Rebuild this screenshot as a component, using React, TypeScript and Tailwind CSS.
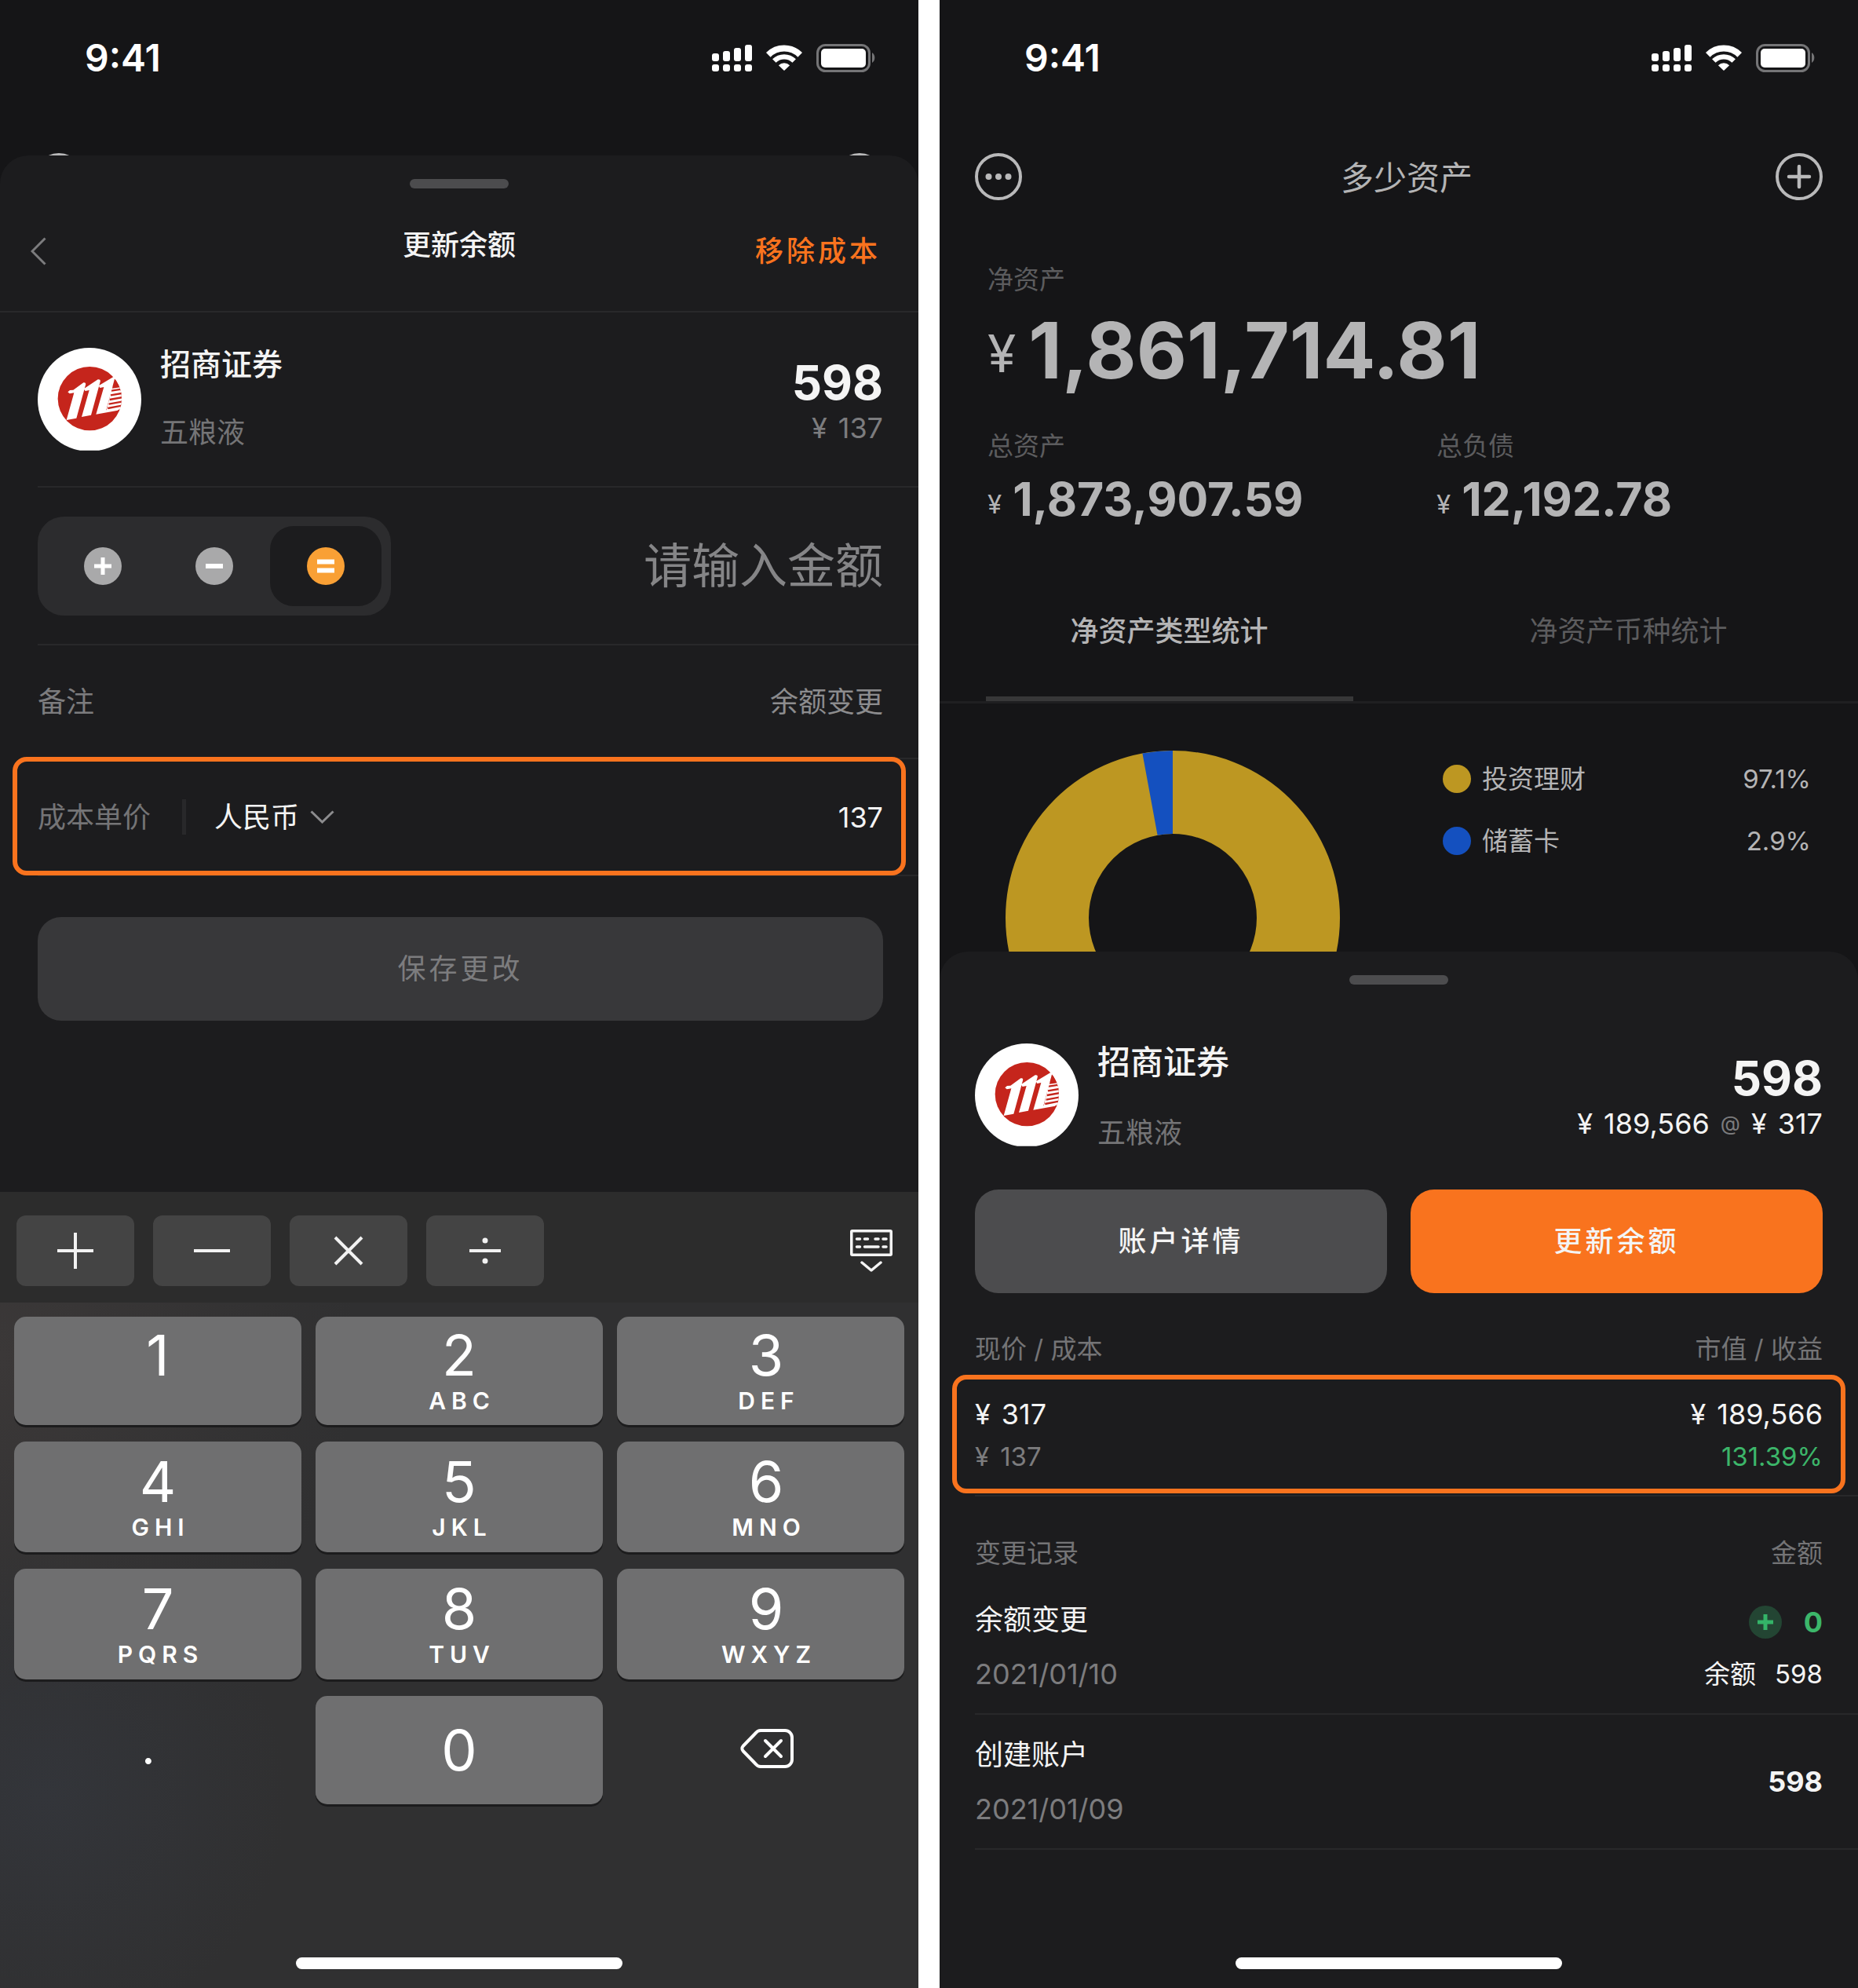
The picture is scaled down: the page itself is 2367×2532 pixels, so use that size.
import React from "react";

const FONT = "font-['Inter','Noto_Sans_CJK_SC',sans-serif]";

function StatusBar() {
  return (
    <div className="flex h-[148px] items-center justify-between pl-[108px] pr-[54px] text-white">
      <span className="text-[48px] font-semibold leading-[60px]">9:41</span>
      <svg width="209" height="36" viewBox="0 0 209 36" fill="none" aria-hidden="true">
        <g fill="#fff">
          <rect x="0" y="12" width="9" height="10" rx="3" />
          <rect x="14" y="9" width="9" height="13" rx="3" />
          <rect x="28" y="5" width="9" height="17" rx="3" />
          <rect x="42" y="1" width="9" height="21" rx="3" />
          <rect x="0" y="26" width="9" height="9" rx="3" />
          <rect x="14" y="26" width="9" height="9" rx="3" />
          <rect x="28" y="26" width="9" height="9" rx="3" />
          <rect x="42" y="26" width="9" height="9" rx="3" />
          <path d="M92 34 L84.9 27.2 A10 10 0 0 1 99.1 27.2Z" />
          <rect x="139" y="6" width="57" height="24" rx="5" />
        </g>
        <path d="M71.8 13.8 A28.7 28.7 0 0 1 112.2 13.8" stroke="#fff" strokeWidth="8" />
        <path d="M79.3 21.6 A18 18 0 0 1 104.7 21.6" stroke="#fff" strokeWidth="6.4" />
        <rect x="134.5" y="1.5" width="66" height="33" rx="10" stroke="#757577" strokeWidth="3" />
        <path d="M204 11 a8 8 0 0 1 0 13Z" fill="#757577" />
      </svg>
    </div>
  );
}

function MoreIcon() {
  return (
    <svg width="60" height="60" viewBox="0 0 60 60" fill="none" aria-hidden="true">
      <circle cx="30" cy="30" r="28" stroke="#b9b9ba" strokeWidth="4" />
      <g fill="#b9b9ba">
        <circle cx="17.5" cy="30" r="4" />
        <circle cx="30" cy="30" r="4" />
        <circle cx="42.5" cy="30" r="4" />
      </g>
    </svg>
  );
}

function AddIcon() {
  return (
    <svg width="60" height="60" viewBox="0 0 60 60" fill="none" aria-hidden="true">
      <circle cx="30" cy="30" r="28" stroke="#b9b9ba" strokeWidth="4" />
      <path d="M30 17v26M17 30h26" stroke="#b9b9ba" strokeWidth="4.5" strokeLinecap="round" />
    </svg>
  );
}

function BrokerLogo() {
  return (
    <svg className="shrink-0" width="132" height="132" viewBox="24 39 396 396" aria-hidden="true">
      <defs>
        <clipPath id="disc">
          <circle cx="223" cy="233" r="122" />
        </clipPath>
        <clipPath id="flat">
          <rect x="24" y="39" width="396" height="392" />
        </clipPath>
      </defs>
      <circle cx="222" cy="237" r="198" fill="#fff" clipPath="url(#flat)" />
      <circle cx="223" cy="233" r="122" fill="#c5251c" />
      <g clipPath="url(#disc)">
        <path fill="#fff" d="M308 188 L350 182 L350 272 L286 283Z" />
        <g stroke="#c5251c" strokeWidth="7">
          <path d="M306 203 L350 196" />
          <path d="M303 220 L350 212" />
          <path d="M299 237 L350 228" />
          <path d="M296 254 L350 244" />
          <path d="M292 270 L350 259" />
        </g>
        <path fill="#c5251c" d="M316 158 L360 150 L350 188 L309 194Z" />
      </g>
      <g fill="#fff">
        <path d="M139 208 L147 201 L160 200 L199 172 Q210 170 207 181 L172 308 L134 315 L163 211 L146 214Z" />
        <path d="M200 196 L254 160 Q266 158 263 169 L228 296 L192 303 L221 201 L206 204Z" />
        <path d="M257 184 L312 151 L320 150 L286 277 L337 271 L330 278 L247 293 L277 189 L262 192Z" />
      </g>
    </svg>
  );
}

function Handle() {
  return <div className="mx-auto h-3 w-[126px] rounded-full bg-[#4c4c4e]" />;
}

function HomeIndicator() {
  return <div className="mx-auto mb-6 h-[15px] w-[416px] rounded-full bg-white" />;
}

function Money({ value }: { value: string }) {
  return (
    <span className="inline-flex gap-[14px]">
      <span>¥</span>
      <span>{value}</span>
    </span>
  );
}

function ModeGlyph({ mode }: { mode: string }) {
  return (
    <svg width="48" height="48" viewBox="0 0 48 48" aria-hidden="true">
      <circle cx="24" cy="24" r="24" fill={mode === "equal" ? "#f9a035" : "#a9a9aa"} />
      <g fill="#fff">
        {mode === "plus" && <path d="M21.5 13h5v8.5H35v5h-8.5V35h-5v-8.5H13v-5h8.5Z" />}
        {mode === "minus" && <rect x="13" y="21" width="22" height="6" />}
        {mode === "equal" && (
          <>
            <rect x="13" y="15.500" width="22" height="6" />
            <rect x="13" y="26.500" width="22" height="6" />
          </>
        )}
      </g>
    </svg>
  );
}

const MODES = [
  { id: "plus", label: "增加" },
  { id: "minus", label: "减少" },
  { id: "equal", label: "等于" },
];

function OperatorGlyph({ op }: { op: string }) {
  return (
    <svg width="48" height="48" viewBox="0 0 48 48" fill="none" stroke="#f2f2f2" strokeWidth="4" aria-hidden="true">
      {op === "加" && <path d="M24 1v46M1 24h46" />}
      {op === "减" && <path d="M1 24h46" />}
      {op === "乘" && <path d="M7 7l34 34M41 7L7 41" />}
      {op === "除" && (
        <>
          <path d="M4 24h40" />
          <circle cx="24" cy="11" r="3.5" fill="#f2f2f2" stroke="none" />
          <circle cx="24" cy="37" r="3.5" fill="#f2f2f2" stroke="none" />
        </>
      )}
    </svg>
  );
}

const KEYS = [
  ["1", ""],
  ["2", "ABC"],
  ["3", "DEF"],
  ["4", "GHI"],
  ["5", "JKL"],
  ["6", "MNO"],
  ["7", "PQRS"],
  ["8", "TUV"],
  ["9", "WXYZ"],
];

const KEY_CLASS =
  "flex flex-col items-center justify-center rounded-[15px] bg-[#6f6f70] text-white shadow-[0_3px_0_#1c1c1d] nth-[3n]:pl-[14px]";

function Keyboard() {
  return (
    <div className="flex flex-col">
      <div className="flex items-start justify-between bg-[#2c2c2c] pb-[21px] pl-[21px] pr-[33px] pt-[30px]">
        <div className="flex gap-6">
          {["加", "减", "乘", "除"].map((op) => (
            <button
              key={op}
              type="button"
              aria-label={op}
              className="flex h-[90px] w-[150px] items-center justify-center rounded-xl bg-[#444444]"
            >
              <OperatorGlyph op={op} />
            </button>
          ))}
        </div>
        <button type="button" aria-label="收起键盘" className="pt-[18px]">
          <svg width="54" height="54" viewBox="0 0 54 54" fill="none" stroke="#f4f4f4" aria-hidden="true">
            <rect x="1.750" y="1.750" width="50.500" height="30.500" rx="1" strokeWidth="3.500" />
            <g strokeWidth="3.500" strokeLinecap="round">
              <path d="M8.500 12h4M18.500 12h4M32 12h4M42 12h4" />
              <path d="M8.500 22h4M18.500 22h17.500M42 22h4" />
              <path d="M15 42l12 10 12-10" strokeLinejoin="round" />
            </g>
          </svg>
        </button>
      </div>
      <div className="bg-[#303031] bg-[radial-gradient(circle_at_5%_72%,#33353a_0%,transparent_24%),radial-gradient(circle_at_0%_8%,#3b3838_0%,transparent_32%)]">
        <div className="grid grid-cols-3 grid-rows-[138px_141px_141px_138px] gap-x-[18px] gap-y-[21px] px-[18px] pt-[18px]">
          {KEYS.map(([digit, letters]) => (
            <button key={digit} type="button" className={KEY_CLASS}>
              <span className="text-[72px] leading-[72px]">{digit}</span>
              <span className="mt-1 h-9 pl-[7px] text-[30px] font-semibold leading-9 tracking-[7px]">{letters}</span>
            </button>
          ))}
          <button
            type="button"
            className="flex items-center justify-center pb-2 pr-6 text-[60px] leading-[60px] text-white"
          >
            .
          </button>
          <button type="button" className={KEY_CLASS}>
            <span className="text-[72px] leading-[72px]">0</span>
          </button>
          <button type="button" aria-label="删除" className="flex items-center justify-center pb-1 pl-4">
            <svg width="68" height="50" viewBox="0 0 68 50" fill="none" stroke="#fff" strokeWidth="4" aria-hidden="true">
              <path
                d="M26 2h31a9 9 0 0 1 9 9v28a9 9 0 0 1-9 9H26a8 8 0 0 1-6-3L3.500 28a4.500 4.500 0 0 1 0-6L20 5a8 8 0 0 1 6-3Z"
                strokeLinejoin="round"
              />
              <path d="M32 15l20 20M52 15L32 35" strokeLinecap="round" />
            </svg>
          </button>
        </div>
        <div className="flex pt-[195px]">
          <HomeIndicator />
        </div>
      </div>
    </div>
  );
}

function UpdateBalanceScreen() {
  return (
    <section className="flex min-h-screen flex-col bg-[#151517]">
      <StatusBar />
      <div className="mt-[47px] flex h-[3px] justify-between overflow-hidden px-[45px]">
        <MoreIcon />
        <AddIcon />
      </div>
      <div className="flex flex-1 flex-col rounded-t-[36px] bg-[#1c1c1e] pt-[30px]">
        <Handle />
        <header className="grid grid-cols-[1fr_auto_1fr] items-center border-b-2 border-[#28282a] px-[39px] pt-1">
          <button type="button" aria-label="返回" className="justify-self-start">
            <svg width="20" height="36" viewBox="0 0 20 36" fill="none" aria-hidden="true">
              <path d="M18.500 1.500L2 18l16.500 16.500" stroke="#7c7c7e" strokeWidth="3" />
            </svg>
          </button>
          <h1 className="pb-4 text-[36px] font-medium leading-[136px] text-[#f4f4f4]">更新余额</h1>
          <button
            type="button"
            className="mr-[9px] justify-self-end text-[36px] font-medium leading-[48px] tracking-[4px] text-[#f9731e]"
          >
            移除成本
          </button>
        </header>

        <div className="ml-12 flex items-start border-b-2 border-[#28282a] pb-11 pr-[45px] pt-[45px]">
          <BrokerLogo />
          <div className="ml-6 flex h-[132px] flex-1 flex-col justify-between">
            <h2 className="text-[39px] font-medium leading-[42px] text-[#f4f4f4]">招商证券</h2>
            <p className="text-[36px] leading-[48px] text-[#747476]">五粮液</p>
          </div>
          <div className="mt-3 text-right">
            <p className="text-[60px] font-bold leading-[64px] text-[#f4f4f4]">598</p>
            <p className="text-[36px] leading-[52px] text-[#7c7c7e]">
              <Money value="137" />
            </p>
          </div>
        </div>

        <div className="ml-12 flex items-center justify-between border-b-2 border-[#28282a] pb-9 pr-[45px] pt-[37px]">
          <div role="radiogroup" aria-label="变更方式" className="flex rounded-[33px] bg-[#2c2c2e] p-3">
            {MODES.map((m) => (
              <label
                key={m.id}
                className="flex h-[102px] w-[142px] items-center justify-center rounded-[30px] has-checked:bg-[#1c1c1e]"
              >
                <input
                  type="radio"
                  name="mode"
                  className="size-0 appearance-none"
                  aria-label={m.label}
                  defaultChecked={m.id === "equal"}
                />
                <ModeGlyph mode={m.id} />
              </label>
            ))}
          </div>
          <input
            type="text"
            aria-label="金额"
            placeholder="请输入金额"
            className="w-[480px] bg-transparent text-right text-[61px] leading-[80px] text-white outline-none placeholder:text-[#858587]"
          />
        </div>

        <div className="ml-12 flex h-[145px] items-center justify-between border-b-2 border-[#28282a] pr-[45px] text-[36px] leading-[48px]">
          <label htmlFor="note" className="text-[#7c7c7e]">
            备注
          </label>
          <input
            id="note"
            type="text"
            defaultValue="余额变更"
            className="w-[480px] bg-transparent text-right text-[#8c8c8e] outline-none"
          />
        </div>

        <div className="relative ml-12 flex h-[149px] items-center border-b-2 border-[#28282a] pr-[45px] text-[36px] leading-[48px]">
          <div className="pointer-events-none absolute -left-8 -top-[3px] bottom-[-1px] right-4 rounded-[18px] border-6 border-[#f9731e] bg-transparent" />
          <label htmlFor="cost" className="text-[#747476]">
            成本单价
          </label>
          <div className="ml-10 h-[45px] w-[5px] bg-[#28282a]" />
          <div className="relative ml-9 flex items-center">
            <select
              aria-label="币种"
              defaultValue="cny"
              className="appearance-none bg-transparent pr-[44px] text-[#f4f4f4] outline-none"
            >
              <option value="cny">人民币</option>
            </select>
            <svg
              className="pointer-events-none absolute right-0"
              width="31"
              height="17"
              viewBox="0 0 31 17"
              fill="none"
              aria-hidden="true"
            >
              <path d="M1.500 1.500l14 13.500 14-13.500" stroke="#8c8c8e" strokeWidth="3" />
            </svg>
          </div>
          <input
            id="cost"
            type="text"
            defaultValue="137"
            className="ml-auto w-[480px] bg-transparent text-right text-[#f4f4f4] outline-none"
          />
        </div>

        <button
          type="button"
          className="ml-12 mr-[45px] mt-[52px] h-[132px] rounded-[30px] bg-[#38383a] text-[36px] leading-[48px] tracking-[4px] text-[#7c7c7e]"
        >
          保存更改
        </button>
      </div>
      <Keyboard />
    </section>
  );
}

const SLICES = [
  { name: "投资理财", share: "97.1%", color: "bg-[#bd9722]" },
  { name: "储蓄卡", share: "2.9%", color: "bg-[#1450bf]" },
];

function Donut() {
  return (
    <svg className="shrink-0" width="426" height="426" viewBox="-213 -213 426 426" fill="none" aria-hidden="true">
      <circle r="160" stroke="#bd9722" strokeWidth="106" />
      <path d="M0 -213 A213 213 0 0 0 -38.600 -209.500 L-19.400 -105.200 A107 107 0 0 1 0 -107Z" fill="#1450bf" />
    </svg>
  );
}

function AssetsScreen() {
  return (
    <section className="flex min-h-screen flex-col bg-[#151517] text-[#b4b4b5]">
      <StatusBar />
      <header className="mt-[47px] flex items-center justify-between px-[45px]">
        <button type="button" aria-label="更多">
          <MoreIcon />
        </button>
        <h1 className="pl-5 pt-1 text-[42px] leading-[56px]">多少资产</h1>
        <button type="button" aria-label="添加">
          <AddIcon />
        </button>
      </header>

      <div className="pl-[61px] pt-[77px]">
        <p className="text-[33px] leading-[48px] text-[#5c5c5e]">净资产</p>
        <p className="mt-[18px] flex items-center gap-4">
          <span className="pt-2 text-[66px] leading-[64px]">¥</span>
          <span className="text-[99px] font-bold leading-[96px]">1,861,714.81</span>
        </p>
      </div>

      <div className="mt-[50px] grid grid-cols-2">
        {[
          { label: "总资产", value: "1,873,907.59", pad: "pl-[61px]" },
          { label: "总负债", value: "12,192.78", pad: "pl-12" },
        ].map((item) => (
          <div key={item.label} className={item.pad}>
            <p className="text-[33px] leading-[48px] text-[#5c5c5e]">{item.label}</p>
            <p className="mt-2 flex items-center gap-[14px]">
              <span className="pt-3 text-[33px] leading-[32px]">¥</span>
              <span className="text-[59px] font-bold leading-[72px]">{item.value}</span>
            </p>
          </div>
        ))}
      </div>

      <nav className="mt-[43px] grid grid-cols-2 border-b-3 border-[#1f1f21] text-[36px] leading-[48px]">
        <button type="button" aria-current="true" className="relative h-[178px] font-medium">
          净资产类型统计
          <span className="absolute bottom-0 left-[10%] h-[6px] w-4/5 bg-[#373738]" />
        </button>
        <button type="button" className="h-[178px] text-[#5c5c5e]">
          净资产币种统计
        </button>
      </nav>

      <div className="flex h-[316px] items-start justify-between overflow-hidden pl-[84px] pr-[60px]">
        <div className="pt-[60px]">
          <Donut />
        </div>
        <ul className="w-[469px] pt-14">
          {SLICES.map((s) => (
            <li key={s.name} className="flex h-[79px] items-center text-[33px] leading-[48px]">
              <span className={`mr-[14px] size-9 rounded-full ${s.color}`} />
              <span>{s.name}</span>
              <span className="ml-auto">{s.share}</span>
            </li>
          ))}
        </ul>
      </div>

      <div className="flex flex-1 flex-col rounded-t-[36px] bg-[#1c1c1e] pt-[30px] text-[#f4f4f4]">
        <Handle />
        <div className="mt-[75px] flex items-start px-[45px]">
          <BrokerLogo />
          <div className="ml-6 flex h-[132px] flex-1 flex-col justify-between">
            <h2 className="text-[42px] font-medium leading-[48px]">招商证券</h2>
            <p className="text-[36px] leading-[36px] text-[#747476]">五粮液</p>
          </div>
          <div className="mt-3 text-right">
            <p className="text-[60px] font-bold leading-[64px]">598</p>
            <p className="flex items-center justify-end gap-[14px] text-[36px] leading-[52px]">
              <Money value="189,566" />
              <span className="text-[26px] leading-[26px] text-[#7c7c7e]">@</span>
              <Money value="317" />
            </p>
          </div>
        </div>

        <div className="mt-[54px] grid grid-cols-2 gap-[30px] px-[45px] text-[36px] font-medium leading-[48px] tracking-[4px]">
          <button type="button" className="h-[132px] rounded-[30px] bg-[#4c4c4e]">
            账户详情
          </button>
          <button type="button" className="h-[132px] rounded-[30px] bg-[#f9731e]">
            更新余额
          </button>
        </div>

        <div className="mt-[47px] flex justify-between px-[45px] text-[33px] leading-[48px] text-[#747476]">
          <span>现价 / 成本</span>
          <span>市值 / 收益</span>
        </div>
        <div className="mx-4 mt-[9px] flex justify-between rounded-[18px] border-6 border-[#f9731e] px-[23px] pb-[21px] pt-6 leading-[40px]">
          <div>
            <p className="text-[36px] leading-[40px]">
              <Money value="317" />
            </p>
            <p className="mt-[14px] text-[33px] leading-[40px] text-[#7c7c7e]">
              <Money value="137" />
            </p>
          </div>
          <div className="text-right">
            <p className="text-[36px] leading-[40px]">
              <Money value="189,566" />
            </p>
            <p className="mt-[14px] text-[33px] leading-[40px] text-[#3cb66a]">131.39%</p>
          </div>
        </div>
        <div className="ml-[45px] mt-[2px] h-[2px] bg-[#28282a]" />

        <table className="ml-[45px] mt-[48px] border-separate border-spacing-0">
          <thead>
            <tr className="text-[33px] leading-[48px] text-[#747476]">
              <th className="p-0 pb-[10px] text-left font-normal">变更记录</th>
              <th className="p-0 pb-[10px] pr-[45px] text-right font-normal">金额</th>
            </tr>
          </thead>
          <tbody>
            <tr>
              <td className="border-b-2 border-[#28282a] py-[25px]">
                <p className="text-[36px] leading-[52px]">余额变更</p>
                <p className="mt-[18px] text-[36px] leading-[50px] text-[#7c7c7e]">2021/01/10</p>
              </td>
              <td className="border-b-2 border-[#28282a] py-[25px] pr-[45px]">
                <p className="flex items-center justify-end gap-7 pt-1 text-[36px] font-bold leading-[50px] text-[#3cb66a]">
                  <svg width="42" height="42" viewBox="0 0 42 42" aria-hidden="true">
                    <circle cx="21" cy="21" r="21" fill="#234533" />
                    <path d="M21 11v20M11 21h20" stroke="#34b468" strokeWidth="5" />
                  </svg>
                  0
                </p>
                <p className="mt-4 flex justify-end gap-6 text-[33px] leading-[50px]">
                  <span>余额</span>
                  <span>598</span>
                </p>
              </td>
            </tr>
            <tr>
              <td className="border-b-2 border-[#28282a] py-[25px]">
                <p className="text-[36px] leading-[52px]">创建账户</p>
                <p className="mt-[18px] text-[36px] leading-[50px] text-[#7c7c7e]">2021/01/09</p>
              </td>
              <td className="border-b-2 border-[#28282a] py-[25px] pr-[45px] text-right text-[36px] font-bold leading-[50px]">
                598
              </td>
            </tr>
          </tbody>
        </table>
        <div className="mt-auto flex">
          <HomeIndicator />
        </div>
      </div>
    </section>
  );
}

export default function App() {
  return (
    <main className={`grid min-h-screen grid-cols-2 gap-[27px] bg-white ${FONT}`}>
      <UpdateBalanceScreen />
      <AssetsScreen />
    </main>
  );
}
